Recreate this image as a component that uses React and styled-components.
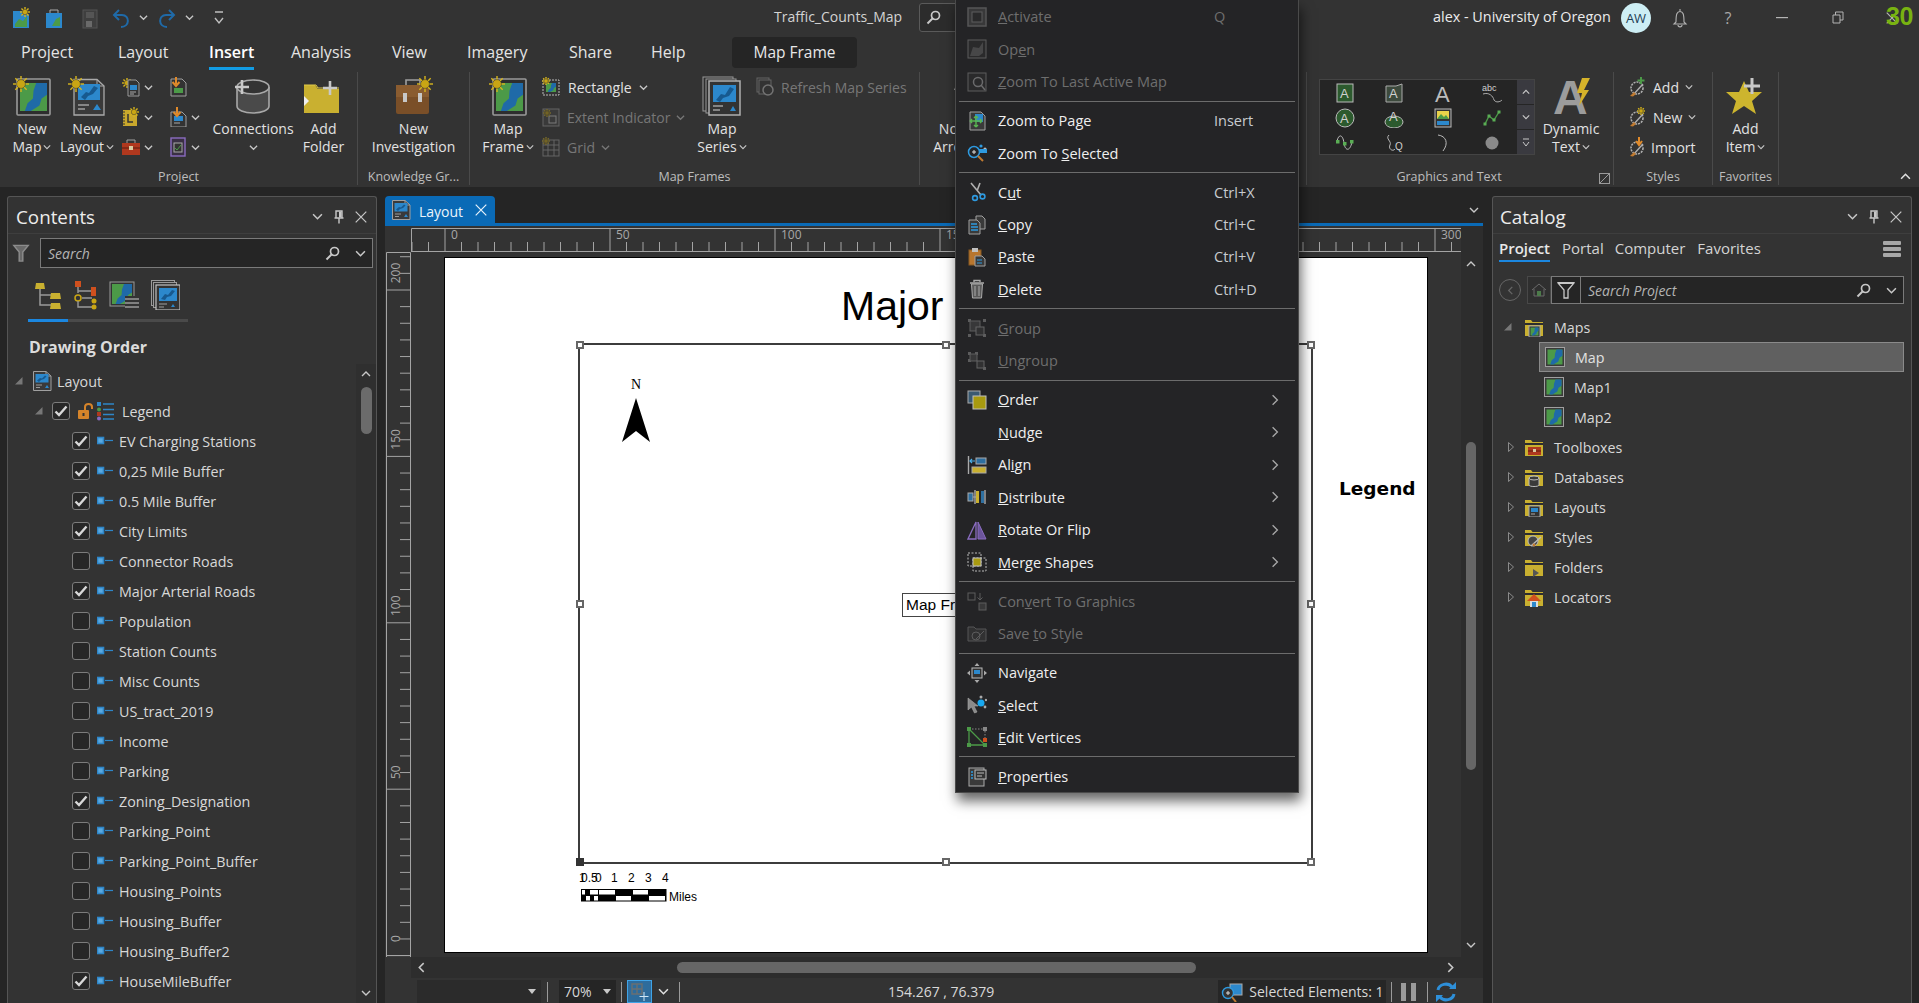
import React from 'react';
import styled, { createGlobalStyle } from 'styled-components';

const FONT = '"Open Sans", "Noto Sans", "Liberation Sans", sans-serif';

const Global = createGlobalStyle`
  html, body { margin: 0; padding: 0; background: #252525; overflow: hidden; }
  * { box-sizing: border-box; }
  body { font-family: ${FONT}; font-size: 14px; color: #e0e0e0; }
`;

const Screen = styled.div`
  position: relative; width: 1919px; height: 1003px; overflow: hidden; background: #252525;
`;

/* ---------- icon primitives ---------- */
const Svg = styled.svg`display: block; flex-shrink: 0;`;
const Ic = ({ w = 20, h = 20, vb, children }) => (
  <Svg width={w} height={h} viewBox={vb || `0 0 ${w} ${h}`} fill="none">{children}</Svg>
);
const Chev = ({ dir = 'down', size = 10, color = '#c8c8c8', sw = 1.4 }) => {
  const p = { down: '1,3 5,7 9,3', up: '1,7 5,3 9,7', left: '7,1 3,5 7,9', right: '3,1 7,5 3,9' }[dir];
  return <Ic w={size} h={size} vb="0 0 10 10"><polyline points={p} stroke={color} strokeWidth={sw} /></Ic>;
};
const CaretDown = ({ color = '#c8c8c8' }) => <Ic w={8} h={5} vb="0 0 8 5"><path d="M0 0H8L4 5Z" fill={color} /></Ic>;
const Sun = ({ x, y, r = 7 }) => {
  const rays = [0, 45, 90, 135].map((a) => {
    const c = Math.cos((a * Math.PI) / 180) * r, s = Math.sin((a * Math.PI) / 180) * r;
    return <line key={a} x1={x - c} y1={y - s} x2={x + c} y2={y + s} stroke="#d8b61c" strokeWidth={1.4} />;
  });
  return <g>{rays}<circle cx={x} cy={y} r={r * 0.55} fill="#c9a514" stroke="#333" strokeWidth={0.5} /></g>;
};
const MapFill = ({ x, y, w, h, land = '#4c9a48', sea = '#1f6aa8' }) => {
  const P = [[.6, 0], [1, 0], [1, .42], [.8, .55], [.72, .8], [.4, 1], [.18, 1], [.28, .72], [.48, .55], [.5, .28]];
  return <g><rect x={x} y={y} width={w} height={h} fill={land} /><polygon points={P.map(([a, b]) => `${x + a * w},${y + b * h}`).join(' ')} fill={sea} /></g>;
};
const MapTile = ({ size = 20 }) => (
  <Ic w={size} h={size} vb="0 0 20 20">
    <rect x=".5" y=".5" width="19" height="19" fill="#3a3a3a" stroke="#a0a0a0" />
    <MapFill x={2.5} y={2.5} w={15} h={15} />
  </Ic>
);
const LayoutArt = ({ dim }) => (
  <g opacity={dim ? .4 : 1}>
    <path d="M1.5 .5H14L19 5V19.5H1.5Z" fill="#3a3a3a" stroke="#a0a0a0" />
    <path d="M14 .5V5H19" stroke="#a0a0a0" />
    <rect x="3.5" y="3" width="13" height="8.5" fill="#2c88cc" />
    <path d="M5 9.5L8 7L10 7.5L13 4.5L14.5 5.5L12 8L9 9L7 11Z" fill="#17598f" />
    <path d="M4 14H10M4 16.5H8" stroke="#9a9a9a" />
    <path d="M13 17L15 14L17 17Z" fill="#2c88cc" />
  </g>
);
const LayoutTile = ({ size = 20 }) => <Ic w={size} h={size} vb="0 0 20 20"><LayoutArt /></Ic>;
const Funnel = ({ size = 18 }) => (
  <Ic w={size} h={size} vb="0 0 18 20"><path d="M1 1.5H17L11 9V19H7V9Z" stroke="#8c8c8c" strokeWidth="1.6" fill="#6a6a6a" /></Ic>
);
const Magnifier = () => (
  <Ic w={15} h={15} vb="0 0 15 15"><circle cx="9.5" cy="5.5" r="4" stroke="#c8c8c8" strokeWidth="1.7" /><line x1="6.5" y1="8.5" x2="1.5" y2="13.5" stroke="#c8c8c8" strokeWidth="2" /></Ic>
);
const Pin = () => (
  <Ic w={10} h={14} vb="0 0 10 14"><path d="M2 1H8V8H2ZM0.5 8H9.5M5 8V13.5" stroke="#c8c8c8" strokeWidth="1.4" /><rect x="5" y="1.5" width="2.5" height="6" fill="#c8c8c8" /></Ic>
);
const Close = ({ size = 12, color = '#c8c8c8' }) => (
  <Ic w={size} h={size} vb="0 0 12 12"><path d="M.7.7L11.3 11.3M11.3.7L.7 11.3" stroke={color} strokeWidth="1.2" /></Ic>
);
const Solid = () => <Ic w={8} h={8} vb="0 0 8 8"><path d="M7.5 0V7.5H0Z" fill="#777" /></Ic>;
const Hollow = () => <Ic w={6} h={10} vb="0 0 6 10"><path d="M.5.5L5.5 5L.5 9.5Z" stroke="#8a8a8a" /></Ic>;

/* ---------- ribbon icons ---------- */
const BigMap = () => (
  <Ic w={38} h={40}>
    <rect x="4" y="3" width="33" height="36" rx="1" fill="#2e2e2e" stroke="#9a9a9a" strokeWidth="1.6" />
    <MapFill x={7} y={7} w={27} h={28} />
    <Sun x={8} y={8} r={8} />
  </Ic>
);
const BigLayout = () => (
  <Ic w={38} h={40}>
    <path d="M6 3.5H29L36 10V39H6Z" fill="#3a3a3a" stroke="#aaa" strokeWidth="1.3" />
    <path d="M29 3.5V10H36" stroke="#aaa" />
    <rect x="10" y="8" width="22" height="16" fill="#2c88cc" />
    <path d="M13 21L18 16L21 17L26 10L30 12L25 18L20 20L17 24Z" fill="#17598f" />
    <path d="M10 29H21M10 33H17" stroke="#a0a0a0" strokeWidth="1.4" />
    <path d="M25 34L29 28L33 34Z" fill="#2c88cc" />
    <Sun x={8} y={8} r={8} />
  </Ic>
);
const Cylinder = () => (
  <Ic w={42} h={36}>
    <path d="M5 9V28C5 32 12 35 21 35S37 32 37 28V9" fill="#4a4a4a" stroke="#a8a8a8" strokeWidth="1.6" />
    <ellipse cx="21" cy="9" rx="16" ry="7" fill="#333" stroke="#a8a8a8" strokeWidth="1.6" />
    <path d="M10 2V16M3 9H17" stroke="#c8c8c8" strokeWidth="2.6" />
  </Ic>
);
const AddFolder = () => (
  <Ic w={44} h={36}>
    <path d="M2 7V35H37V11H16L13 7Z" fill="#c9b030" />
    <path d="M2 7H14L16 10H37" stroke="#e2cb4a" />
    <path d="M2 18L7 23L2 28Z" fill="#eee" />
    <path d="M28 3V17M21 10H35" stroke="#c8c8c8" strokeWidth="2.6" />
  </Ic>
);
const Briefcase = () => (
  <Ic w={42} h={40}>
    <path d="M13 9V4H27V9" stroke="#a0a0a0" strokeWidth="1.6" />
    <rect x="3" y="9" width="33" height="29" rx="2" fill="#7a4f28" />
    <rect x="3" y="9" width="33" height="12" fill="#8a5c30" />
    <rect x="10" y="17" width="4" height="9" fill="#c8c8c8" /><rect x="25" y="17" width="4" height="9" fill="#c8c8c8" />
    <Sun x={32} y={8} r={8} />
  </Ic>
);
const MapSeries = () => (
  <Ic w={40} h={40}>
    <rect x="1" y="1" width="30" height="34" fill="#2e2e2e" stroke="#9a9a9a" />
    <rect x="4" y="3" width="30" height="34" fill="#2e2e2e" stroke="#9a9a9a" />
    <rect x="7" y="5" width="31" height="34" fill="#333" stroke="#b0b0b0" strokeWidth="1.5" />
    <rect x="11" y="9" width="23" height="17" fill="#2c88cc" />
    <path d="M14 24L19 18L23 19L28 11L32 13L27 20L21 22L18 26Z" fill="#17598f" />
    <path d="M11 30H21M11 34H18" stroke="#a0a0a0" strokeWidth="1.3" />
    <path d="M28 35L31 30L34 35Z" fill="#2c88cc" />
  </Ic>
);
const DynamicA = styled.text`font-family: "Liberation Sans", sans-serif; font-size: 48px; font-weight: 700; fill: #9c9c9c;`;
const DynamicText = () => (
  <Ic w={40} h={40}>
    <DynamicA x="2" y="38">A</DynamicA>
    <path d="M31 2H39L33 14H38L28 30L31 17H26Z" fill="#d6b32a" />
  </Ic>
);
const StarPlus = () => (
  <Ic w={42} h={38}>
    <path d="M19 4L24 15L37 15L27 24L31 37L19 29L7 37L11 24L1 15L14 15Z" fill="#cdb52e" />
    <path d="M27 1V17M19 9H35" stroke="#c8c8c8" strokeWidth="3" />
  </Ic>
);
const NorthPeek = () => (
  <Ic w={20} h={36}><rect x="7" y="2" width="8" height="34" fill="#2c88cc" opacity=".7" /><path d="M11 0L6 12H16Z" fill="#aaa" /></Ic>
);
const Small = {
  newDoc: <Ic><Sun x={6} y={6} r={5} /><path d="M7 3H15L18 6V19H7Z" stroke="#9a9a9a" fill="#333" /><rect x="9" y="8" width="7" height="5" fill="#2c88cc" /><path d="M9 15H15M9 17H13" stroke="#aaa" /></Ic>,
  importDoc: <Ic><path d="M3 2H14L18 6V19H3Z" stroke="#a0a0a0" fill="#333" /><rect x="6" y="11" width="9" height="5" fill="#4c9a48" /><path d="M8 0V7M4.5 5L8 9L11.5 5" stroke="#e08a2a" strokeWidth="2" /></Ic>,
  report: <Ic><rect x="2" y="3" width="14" height="16" fill="#c9a82c" /><path d="M2 5h2M2 8h2M2 11h2M2 14h2M2 17h2" stroke="#333" /><path d="M7 7V15H12" stroke="#333" strokeWidth="1.5" /><Sun x={13} y={5} r={5} /></Ic>,
  importLayout: <Ic><path d="M3 5H14L18 9V20H3Z" stroke="#a0a0a0" fill="#333" /><rect x="6" y="9" width="9" height="5" fill="#2c88cc" /><path d="M6 16H12" stroke="#aaa" /><path d="M9 0V7M5.5 5L9 9L12.5 5" stroke="#e08a2a" strokeWidth="2" /></Ic>,
  toolbox: <Ic><rect x="1" y="6" width="18" height="12" fill="#b0381e" /><path d="M6 6V3H14V6" stroke="#a0a0a0" /><path d="M1 11H19" stroke="#5a1c10" /><rect x="8" y="9" width="4" height="4" fill="#d9c9a0" /></Ic>,
  notebook: <Ic><rect x="3" y="1" width="14" height="18" fill="#3a3044" stroke="#8a6cc0" strokeWidth="1.4" /><rect x="6" y="6" width="8" height="9" fill="#333" stroke="#aaa" /><path d="M7 11L9 13L13 8" stroke="#4c9a48" /></Ic>,
  rectangle: <Ic><rect x="2" y="3" width="16" height="15" stroke="#bbb" strokeDasharray="2 1" /><MapFill x={5} y={6} w={10} h={9} /><Sun x={5} y={4} r={4} /></Ic>,
  extent: <Ic><g opacity=".42"><rect x="2" y="2" width="16" height="17" stroke="#aaa" fill="#444" /><rect x="8" y="9" width="7" height="7" stroke="#ddd" /><Sun x={6} y={6} r={4} /></g></Ic>,
  grid: <Ic><g opacity=".42"><rect x="2" y="3" width="16" height="16" stroke="#aaa" /><path d="M2 8H18M2 13H18M7 3V19M13 3V19" stroke="#aaa" /><Sun x={5} y={4} r={4} /></g></Ic>,
  refresh: <Ic><g opacity=".42"><rect x="1" y="1" width="12" height="14" stroke="#aaa" /><rect x="3" y="3" width="12" height="14" stroke="#aaa" fill="#333" /><circle cx="12" cy="13" r="5" stroke="#ccc" strokeWidth="1.5" fill="#333" /></g></Ic>,
};
const Brush = ({ children }) => (
  <Ic>
    <circle cx="10" cy="11" r="6" stroke="#b0b0b0" strokeDasharray="2 1" strokeWidth="1.6" />
    <path d="M16 7L6 18" stroke="#b0b0b0" strokeWidth="1.4" />
    <path d="M7 15L3 19L6 19.5L9 17Z" fill="#c07a30" />
    {children}
  </Ic>
);
const GalleryGlyph = styled.text`font-family: "Liberation Sans", sans-serif; font-size: ${(p) => p.$s || 13}px; fill: ${(p) => p.$c || '#d0d0d0'};`;
const gallery = [
  <Ic key="0"><rect x="2" y="1" width="16" height="18" fill="#2c5a2e" stroke="#bbb" /><GalleryGlyph x="5" y="15">A</GalleryGlyph></Ic>,
  <Ic key="1"><path d="M2 3H12L18 1V19H2Z" fill="#3d4a3d" stroke="#aaa" /><GalleryGlyph x="5" y="15">A</GalleryGlyph></Ic>,
  <Ic key="2" w={22} h={22}><GalleryGlyph x="3" y="20" $s={22} $c="#bcbcbc">A</GalleryGlyph></Ic>,
  <Ic key="3" w={22} h={22}><GalleryGlyph x="1" y="9" $s={9}>abc</GalleryGlyph><path d="M2 12C8 10 12 14 13 18C15 21 19 20 21 18" stroke="#aaa" /></Ic>,
  <Ic key="4"><circle cx="10" cy="10" r="9" fill="#2c5a2e" stroke="#bbb" /><GalleryGlyph x="5" y="15">A</GalleryGlyph></Ic>,
  <Ic key="5"><ellipse cx="10" cy="14" rx="9" ry="6" fill="#2c5a2e" stroke="#bbb" /><GalleryGlyph x="5" y="13">A</GalleryGlyph></Ic>,
  <Ic key="6"><rect x="2" y="1" width="16" height="18" fill="#333" stroke="#bbb" /><rect x="4" y="3" width="12" height="8" fill="#e8d24a" /><path d="M4 11L8 6L11 9L13 7L16 11Z" fill="#4c9a48" /><rect x="4" y="13" width="12" height="4" fill="#2c88cc" /></Ic>,
  <Ic key="7"><path d="M3 16L7 8L12 12L17 4" stroke="#4c9a48" strokeWidth="1.4" /><rect x="1.5" y="14.5" width="3" height="3" fill="#5aae55" /><rect x="5.5" y="6.5" width="3" height="3" fill="#5aae55" /><rect x="10.5" y="10.5" width="3" height="3" fill="#5aae55" /><rect x="15.5" y="2.5" width="3" height="3" fill="#5aae55" /></Ic>,
  <Ic key="8"><path d="M2 8C4 0 8 2 9 10S15 19 17 9" stroke="#bbb" /><rect x="1" y="7" width="3.5" height="3.5" fill="#5aae55" /><rect x="8" y="9" width="3.5" height="3.5" fill="#5aae55" /><rect x="15" y="7" width="3.5" height="3.5" fill="#5aae55" /></Ic>,
  <Ic key="9"><path d="M5 2C1 6 8 8 6 12S9 19 11 16" stroke="#bbb" /><GalleryGlyph x="11" y="17" $s={10}>Q</GalleryGlyph></Ic>,
  <Ic key="10"><path d="M5 2C13 3 16 10 10 18" stroke="#bbb" /></Ic>,
  <Ic key="11"><circle cx="10" cy="10" r="6.5" fill="#8a8a8a" /></Ic>,
];

/* ---------- title bar ---------- */
const TitleBar = styled.div`
  height: 35px; background: #333; display: flex; align-items: center; position: relative;
`;
const Quick = styled.div`
  width: ${(p) => p.$w}px; margin-left: ${(p) => p.$ml || 0}px; display: flex; justify-content: center; align-items: center;
`;
const DocTitle = styled.div`
  margin-left: 533px; width: 145px; padding-bottom: 2px; font-size: 14px; color: #d4d4d4; white-space: nowrap;
`;
const TitleSearch = styled.div`
  width: 50px; height: 29px; border: 1px solid #5a5a5a; border-radius: 3px 0 0 3px; background: #2c2c2c;
  display: flex; align-items: center; padding-left: 6px;
`;
const UserName = styled.div`
  margin-left: 464px; width: 188px; padding-bottom: 2px; font-size: 14.4px; color: #ececec; white-space: nowrap;
`;
const Avatar = styled.div`
  width: 30px; height: 30px; border-radius: 50%; background: #cdeef4; color: #1d3d55;
  display: flex; align-items: center; justify-content: center; font-size: 13px;
`;
const WinBtn = styled.div`
  margin-left: ${(p) => p.$ml}px; width: 20px; display: flex; justify-content: center; color: #a8a8a8; font-size: 16px;
`;
const GreenBadge = styled.div`
  position: absolute; left: 1886px; top: 2px; font-size: 25px; font-weight: 800; color: #79b311;
  font-family: "Liberation Sans", sans-serif; letter-spacing: -.5px;
`;

/* ---------- tabs ---------- */
const TabRow = styled.div`
  height: 35px; background: #333; display: flex; align-items: flex-start;
`;
const RibbonTab = styled.div`
  width: ${(p) => p.$w}px; margin-left: ${(p) => p.$ml || 0}px; height: 33px; padding-top: 6px; line-height: 22px; font-size: 16px;
  font-weight: ${(p) => (p.$active ? 600 : 400)}; color: ${(p) => (p.$active ? '#fff' : '#e4e4e4')};
  white-space: nowrap;
`;
const Underlined = styled.span`
  display: inline-block; padding-bottom: 4px; border-bottom: 4px solid #129ce4; line-height: 22px;
`;
const ContextTab = styled.div`
  margin-left: 46px; margin-top: 2px; width: 125px; height: 31px; padding-bottom: 1px; background: #252525; border-radius: 4px;
  font-size: 15.5px; color: #e8e8e8; display: flex; align-items: center; justify-content: center;
`;

/* ---------- ribbon ---------- */
const Ribbon = styled.div`
  height: 117px; background: #333; padding-top: 2px; display: flex; position: relative;
`;
const Group = styled.div`
  width: ${(p) => p.$w}px; height: 113px; border-right: 1px solid #4a4a4a; display: flex; flex-direction: column;
  position: relative; flex-shrink: 0;
`;
const Tools = styled.div`
  height: 97px; display: flex; padding-left: ${(p) => p.$pl || 0}px;
`;
const GroupLabel = styled.div`
  height: 16px; line-height: 16px; text-align: center; font-size: 12.5px; color: #bdbdbd; white-space: nowrap;
  padding-right: ${(p) => p.$pr || 0}px;
`;
const Large = styled.div`
  width: ${(p) => p.$w}px; margin-left: ${(p) => p.$ml || 0}px; flex-shrink: 0; display: flex; flex-direction: column; align-items: center;
`;
const LargeIcon = styled.div`
  height: 48px; display: flex; align-items: center; justify-content: center;
`;
const LargeText = styled.div`
  font-size: 14px; line-height: 18px; color: #e2e2e2; text-align: center; white-space: nowrap;
  display: flex; flex-direction: column; align-items: center;
`;
const TextLine = styled.span`
  display: flex; align-items: center; gap: 2px; height: 18px;
`;
const SmallCol = styled.div`
  width: ${(p) => p.$w}px; margin-left: ${(p) => p.$ml || 0}px; flex-shrink: 0; display: flex; flex-direction: column;
`;
const SmallRow = styled.div`
  height: 30px; display: flex; align-items: center; gap: ${(p) => p.$gap ?? 6}px; font-size: 14px; white-space: nowrap;
  color: ${(p) => (p.$off ? '#777' : '#e2e2e2')};
`;
const MiniGrid = styled.div`
  margin-left: 6px; width: 89px; display: grid; grid-template-columns: 47px 42px; grid-auto-rows: 30px; align-items: center;
`;
const MiniCell = styled.div`display: flex; align-items: center; gap: 3px;`;
const Gallery = styled.div`
  margin-left: 12px; margin-top: 7px; width: 216px; height: 76px; background: #252525; border: 1px solid #444;
  display: flex; flex-shrink: 0;
`;
const GalleryGrid = styled.div`
  width: 197px; display: grid; grid-template-columns: repeat(4, 1fr); grid-auto-rows: 25px; align-items: center; justify-items: center;
`;
const GalleryScroll = styled.div`
  flex: 1; display: flex; flex-direction: column; gap: 1px; background: #252525;
`;
const GalleryBtn = styled.div`
  flex: 1; background: #3a3a40; display: flex; align-items: center; justify-content: center;
`;
const Launcher = styled.div`
  position: absolute; right: 3px; bottom: 1px; width: 11px; height: 11px; border: 1px solid #9a9a9a;
  background: linear-gradient(135deg, transparent 45%, #9a9a9a 45%, #9a9a9a 55%, transparent 55%);
`;
const CollapseBtn = styled.div`
  position: absolute; right: 8px; bottom: 5px;
`;

/* ---------- body ---------- */
const Body = styled.div`
  height: 816px; padding: 9px 7px 0; display: flex; align-items: stretch;
`;
const Panel = styled.div`
  width: ${(p) => p.$w}px; margin-left: ${(p) => p.$ml || 0}px; flex-shrink: 0; background: #333; border: 1px solid #555; border-bottom: none;
  border-radius: 3px 3px 0 0; display: flex; flex-direction: column; position: relative;
`;
const PanelHead = styled.div`
  height: 37px; border-bottom: 1px solid #3e3e3e; display: flex; align-items: center; padding: 4px 4px 0 ${(p) => p.$pl}px; flex-shrink: 0;
`;
const PanelTitle = styled.div`
  flex: 1; font-size: 18.8px; line-height: 26px; color: #ececec;
`;
const PanelBtn = styled.div`
  width: 22px; display: flex; justify-content: center; margin-top: -1px;
`;
const SearchRow = styled.div`
  display: flex; align-items: center; height: 30px; margin-top: 4px; flex-shrink: 0;
`;
const SearchBox = styled.div`
  flex: 1; height: 30px; background: #252525; border: 1px solid #7a7a7a; display: flex; align-items: center; padding: 0 6px;
  font-style: italic; font-size: 14px; color: #b4b4b4; margin-right: 3px;
`;
const SearchText = styled.div`flex: 1; padding-left: ${(p) => p.$pl ?? 1}px;`;
const SearchChev = styled.div`margin-left: 15px; display: flex;`;
const FilterSlot = styled.div`
  width: 32px; display: flex; justify-content: flex-start; padding-left: 4px;
`;
const ViewTools = styled.div`
  margin: 9px 0 0 20px; width: 160px; display: flex; flex-direction: column; flex-shrink: 0;
`;
const ViewIcons = styled.div`
  height: 36px; display: flex; align-items: center; justify-content: space-between; padding: 0 8px 0 6px;
`;
const ViewRail = styled.div`
  height: 3px; margin-top: 6px; background: #4a4a4a; position: relative;
`;
const ViewRailActive = styled.div`
  position: absolute; left: 0; top: 0; bottom: 0; width: 40px; background: #1b87e0;
`;
const OrderHead = styled.div`
  margin: 12px 0 0 21px; height: 26px; line-height: 26px; font-size: 16px; font-weight: 700; color: #dcdcdc; flex-shrink: 0;
`;
const TreeWrap = styled.div`
  flex: 1; display: flex; margin-top: 4px; min-height: 0;
`;
const TreeList = styled.div`
  flex: 1; padding-top: 2px; overflow: hidden;
`;
const TreeScroll = styled.div`
  width: 20px; background: #2f2f2f; display: flex; flex-direction: column; align-items: center; position: relative; flex-shrink: 0;
`;
const ScrollArrow = styled.div`
  height: 20px; display: flex; align-items: center; justify-content: center;
`;
const TreeThumb = styled.div`
  width: 11px; height: 47px; margin-top: 3px; border-radius: 6px; background: #6b6b6b;
`;
const ScrollPush = styled.div`flex: 1;`;
const Row = styled.div`
  height: 30px; display: flex; align-items: center; padding-left: ${(p) => p.$pl}px; font-size: 14.3px; color: #d8d8d8; white-space: nowrap;
`;
const Tri = styled.div`
  width: ${(p) => p.$w}px; display: flex; flex-shrink: 0;
`;
const Check = styled.div`
  width: 18px; height: 18px; border: 1px solid #7c7c7c; border-radius: 3px; background: #272727; flex-shrink: 0;
  display: flex; align-items: center; justify-content: center; margin-right: ${(p) => p.$mr ?? 7}px;
`;
const RowText = styled.span`margin-left: ${(p) => p.$ml}px;`;
const Tick = () => <Ic w={14} h={12} vb="0 0 14 12"><path d="M1.5 6.5L5 10L12.5 1.5" stroke="#d8d8d8" strokeWidth="2.4" /></Ic>;
const Sym = () => <Ic w={16} h={10} vb="0 0 16 10"><rect x=".5" y="1.5" width="6" height="6" fill="#5aa9e0" stroke="#2e86c8" strokeWidth="1.6" /><path d="M8 4.5H16" stroke="#2e86c8" strokeWidth="1.2" /></Ic>;
const Lock = () => <Ic w={17} h={18}><rect x="1" y="8" width="11" height="9" rx="1" fill="#d5842a" /><path d="M8 8V5C8 1 15 1 15 5V7" stroke="#d5842a" strokeWidth="2" /><rect x="5.5" y="11" width="2" height="3" fill="#333" /></Ic>;
const LegendIc = () => <Ic w={18} h={19}><rect x="0" y="0" width="4" height="4" fill="#2e86c8" /><circle cx="2" cy="7.5" r="2" fill="#4c9a48" /><rect x="0" y="10" width="4" height="4" fill="#b0381e" /><circle cx="2" cy="16.5" r="2" fill="#8a6cc0" /><path d="M6 2H17M6 7.5H17M6 12.5H17M6 17H17" stroke="#2e86c8" strokeWidth="1.6" /></Ic>;

/* contents view icons */
const DrawOrder = () => <Ic w={28} h={30}><path d="M6 5V25H18M6 15H18" stroke="#9a9a9a" strokeWidth="1.5" /><path d="M2 3H10L11 9H1ZM17 13H26L27 19H16ZM17 23H26L27 29H16Z" fill="#c9b030" /></Ic>;
const SourceOrder = () => <Ic w={24} h={30}><rect x="1" y="1" width="6" height="6" fill="#d0501e" /><circle cx="4" cy="18" r="3" stroke="#c9a514" strokeWidth="1.5" /><path d="M4 7V13M4 21V27H18M4 11H18M8 18H18" stroke="#9a9a9a" strokeWidth="1.4" /><rect x="17" y="7" width="5" height="5" fill="#d0501e" /><rect x="17" y="11" width="5" height="5" fill="#d0501e" /><circle cx="20" cy="21" r="2.5" fill="#c9a514" /><circle cx="20" cy="27" r="2.5" fill="#c9a514" /></Ic>;
const MapList = () => <Ic w={30} h={29}><rect x="1" y="1" width="24" height="24" fill="#333" stroke="#9a9a9a" /><MapFill x={3} y={3} w={20} h={20} /><rect x="16" y="15" width="14" height="14" fill="#333" /><path d="M16 18H30M16 22H30M16 26H30" stroke="#9a9a9a" strokeWidth="1.6" /></Ic>;
const Stack = () => <Ic w={29} h={30}><rect x=".5" y=".5" width="23" height="25" stroke="#9a9a9a" fill="#333" /><rect x="2.5" y="2.5" width="23" height="25" stroke="#9a9a9a" fill="#333" /><rect x="5" y="5" width="24" height="25" stroke="#c0c0c0" strokeWidth="1.2" fill="#333" /><rect x="8" y="8" width="18" height="13" fill="#2c88cc" /><path d="M10 19L14 14L17 15L21 10L24 11L20 16L16 17L14 20Z" fill="#17598f" /><path d="M8 24H16M8 27H13" stroke="#a0a0a0" /><path d="M20 27L22 24L24 27Z" fill="#2c88cc" /></Ic>;

/* ---------- centre ---------- */
const Center = styled.div`
  width: 1098px; margin-left: 8px; flex-shrink: 0; display: flex; flex-direction: column;
`;
const DocStrip = styled.div`
  height: 27px; display: flex; justify-content: space-between; align-items: center; padding-right: 4px; background: #252525;
`;
const DocTab = styled.div`
  width: 110px; height: 27px; background: #0a6ab6; border-radius: 4px 4px 0 0; display: flex; align-items: center;
  padding: 0 8px 0 6px; gap: 8px; color: #eaf4fb; font-size: 14px;
`;
const DocTabText = styled.span`flex: 1; padding-top: 3px;`;
const BlueRule = styled.div`height: 3px; background: #0a6ab6; flex-shrink: 0;`;
const Workspace = styled.div`
  display: grid; grid-template-columns: 26px 1050px 22px; grid-template-rows: 26px 705px 21px 25px; background: #333;
`;
const RulerText = styled.text`font-family: ${FONT}; font-size: 12px; fill: #a8a8a8;`;
const Corner = styled.div`background: ${(p) => p.$bg || '#333'};`;
const TopRuler = () => {
  const lines = [];
  for (let x = 445 - 411 - 16.5 * 2; x < 1050; x += 16.5) {
    const k = Math.round((x - 34) / 16.5);
    const major = k % 10 === 0 && k >= 0;
    lines.push(<line key={k} x1={x} x2={x} y1={major ? 2 : 16} y2={25} stroke="#a4a4a4" />);
    if (major) lines.push(<RulerText key={`t${k}`} x={x + 6} y={13}>{k * 5}</RulerText>);
  }
  return (
    <Ic w={1050} h={26}>
      <path d="M0.5 25V2.5H1050M0 25.5H1050" stroke="#a4a4a4" />
      {lines}
    </Ic>
  );
};
const LeftRuler = () => {
  const out = [];
  for (let i = -3; i <= 40; i++) {
    const y = 38 + (i * 166.4) / 10;
    const major = i % 10 === 0 && i >= 0;
    out.push(<line key={i} x1={major ? 1 : 15} x2={25} y1={y} y2={y} stroke="#a4a4a4" />);
    if (major) {
      const cy = y - 17;
      out.push(<RulerText key={`t${i}`} transform={`rotate(-90 11 ${cy})`} x={11} y={cy + 4} textAnchor="middle">{200 - i * 5}</RulerText>);
    }
  }
  return (
    <Ic w={26} h={705}>
      <path d="M1.5 705V.5H25.5V705" stroke="#a4a4a4" />
      <line x1="1" x2="25" y1="703.5" y2="703.5" stroke="#a4a4a4" />
      {out}
    </Ic>
  );
};
const Canvas = styled.div`
  padding: 5px 33px 4px; background: #333; height: 705px;
`;
const Page = styled.div`
  position: relative; width: 984px; height: 696px; background: #fff; border: 1px solid #000; color: #000;
  font-family: "Liberation Sans", sans-serif;
`;
const PageTitle = styled.div`
  position: absolute; left: 396px; top: 24px; font-size: 41px; line-height: 48px; white-space: nowrap;
`;
const Frame = styled.div`
  position: absolute; left: 133px; top: 85px; width: 735px; height: 521px; border: 2px solid #3c3c3c;
`;
const Handle = styled.div`
  position: absolute; left: ${(p) => p.$x}%; top: ${(p) => p.$y}%; width: 8px; height: 8px; margin: -4px 0 0 -4px;
  background: ${(p) => (p.$fill ? '#333' : '#fff')}; border: 2px solid ${(p) => (p.$fill ? '#333' : '#666')};
`;
const NorthBlock = styled.div`
  position: absolute; left: 40px; top: 32px; width: 32px; display: flex; flex-direction: column; align-items: center;
  font-family: "Liberation Serif", serif; font-size: 14px; line-height: 16px; gap: 5px;
`;
const FrameTag = styled.div`
  position: absolute; left: 322px; top: 248px; height: 24px; padding: 0 3px; line-height: 22px; background: #fff;
  border: 1px solid #444; font-family: "Liberation Sans", sans-serif; font-size: 15.5px; white-space: nowrap;
`;
const LegendWord = styled.div`
  position: absolute; left: 894px; top: 218px; font-family: "DejaVu Sans", sans-serif; font-weight: 700; font-size: 18.5px; line-height: 26px;
`;
const ScaleBar = styled.div`
  position: absolute; left: 134px; top: 613px; width: 170px; height: 40px;
`;
const ScaleLabel = styled.span`
  position: absolute; left: ${(p) => p.$x}px; top: ${(p) => p.$y}px; font-size: 12px; line-height: 14px;
`;
const ScaleGraphic = () => {
  const tops = [[1, 4], [9, 17], [18, 34], [52, 67]], bots = [[5, 9], [13, 17], [35, 50], [68, 84]];
  return (
    <Ic w={86} h={13}>
      <rect x="0" y="0" width="85.5" height="12.5" fill="#000" />
      {tops.map(([a, b]) => <rect key={a} x={a} y="1" width={b - a} height="4.5" fill="#fff" />)}
      {bots.map(([a, b]) => <rect key={a} x={a} y="7" width={b - a} height="4.5" fill="#fff" />)}
    </Ic>
  );
};
const ScaleBarDraw = styled.div`position: absolute; left: 2px; top: 18px;`;
const VScroll = styled.div`
  background: #2d2d2d; display: flex; flex-direction: column; align-items: center; padding: 2px 2px 2px 0;
`;
const VThumb = styled.div`
  width: 10px; height: 328px; margin-top: 168px; border-radius: 5px; background: #666;
`;
const HScroll = styled.div`
  background: #2d2d2d; display: flex; align-items: center; padding-left: 266px; position: relative;
`;
const HThumb = styled.div`
  width: 519px; height: 11px; border-radius: 6px; background: #666;
`;
const HArrow = styled.div`
  position: absolute; ${(p) => (p.$right ? 'right: 5px;' : 'left: 5px;')} top: 5px;
`;
const StatusBar = styled.div`
  grid-column: 1 / -1; background: #333; display: flex; align-items: center; font-size: 14px; color: #d8d8d8; white-space: nowrap; padding-top: 2px;
`;
const StatusBox = styled.div`
  margin-left: ${(p) => p.$ml}px; width: ${(p) => p.$w}px; height: 23px; background: ${(p) => p.$bg}; flex-shrink: 0;
  display: flex; align-items: center; justify-content: ${(p) => p.$justify || 'flex-end'}; padding: 0 5px 0 ${(p) => p.$pl ?? 5}px; gap: 6px;
`;
const StatusSep = styled.div`
  margin-left: ${(p) => p.$ml}px; width: 1px; height: 20px; background: #9a9a9a; flex-shrink: 0;
`;
const GridToggle = styled.div`
  margin-left: 5px; width: 25px; height: 23px; background: #2e6c9c; border: 1px solid #3fa4e8; display: flex; align-items: center; justify-content: center;
`;
const StatusItem = styled.div`
  margin-left: ${(p) => p.$ml}px; display: flex; align-items: center;
`;
const PauseBar = styled.div`
  width: 5px; height: 18px; background: #9a9a9a; margin-right: 5px;
`;

/* ---------- catalog ---------- */
const CatTabs = styled.div`
  height: 28px; display: flex; align-items: flex-start; padding-left: 6px; position: relative; flex-shrink: 0;
`;
const CatTab = styled.div`
  margin-right: ${(p) => p.$mr}px; height: 28px; line-height: 29px; font-size: 15px; color: ${(p) => (p.$on ? '#e8e8e8' : '#d4d4d4')};
  font-weight: ${(p) => (p.$on ? 600 : 400)}; border-bottom: ${(p) => (p.$on ? '2px solid #1b87e0' : 'none')}; white-space: nowrap;
`;
const Hamburger = styled.div`
  position: absolute; right: 10px; top: 7px; width: 18px; height: 16px; display: flex; flex-direction: column; justify-content: space-between;
`;
const HamBar = styled.div`height: 4px; background: #a8a8a8; border-radius: 1px;`;
const CatSearch = styled.div`
  margin-top: 14px; height: 28px; padding: 0 7px 0 6px; display: flex; align-items: center; flex-shrink: 0;
`;
const RoundBack = styled.div`
  width: 22px; height: 22px; border-radius: 50%; border: 1.5px solid #666; display: flex; align-items: center; justify-content: center; margin-right: 6px;
`;
const SquareBtn = styled.div`
  width: ${(p) => p.$w}px; height: 28px; border: 1px solid ${(p) => (p.$on ? '#7a7a7a' : '#484848')}; background: ${(p) => (p.$on ? '#252525' : '#2f2f2f')};
  display: flex; align-items: center; justify-content: center; flex-shrink: 0;
`;
const CatInput = styled(SearchBox)`
  height: 28px; margin-right: 0; border-left: none;
`;
const CatTree = styled.div`padding-top: 8px; flex: 1;`;
const SelRow = styled(Row)`
  margin: 0 7px 0 46px; padding-left: 5px; background: #606060; border: 1px solid #8a8a8a; color: #e0e0e0;
`;
const FolderBase = ({ children }) => (
  <Ic w={20} h={20}>
    <path d="M1 3H7L8.5 5H19V19H1Z" fill="#c9b030" />
    <rect x="1" y="6" width="18" height="2" fill="#2e2e2e" />
    {children}
  </Ic>
);
const catIcons = {
  maps: <FolderBase><rect x="5" y="9" width="11" height="11" fill="#333" stroke="#aaa" /><MapFill x={6.5} y={10.5} w={8} h={8} /></FolderBase>,
  toolboxes: <FolderBase><rect x="4" y="10" width="13" height="8" fill="#b0381e" /><path d="M4 14H17" stroke="#5a1c10" /><rect x="9" y="12" width="3" height="3" fill="#d9c9a0" /></FolderBase>,
  databases: <FolderBase><path d="M5 11V18C5 20 15 20 15 18V11" fill="#3a3a3a" stroke="#bbb" /><ellipse cx="10" cy="11" rx="5" ry="2" fill="#3a3a3a" stroke="#bbb" /></FolderBase>,
  layouts: <FolderBase><rect x="5" y="9" width="11" height="11" fill="#333" stroke="#aaa" /><rect x="7" y="11" width="7" height="4" fill="#2c88cc" /><path d="M7 17H11" stroke="#aaa" /></FolderBase>,
  styles: <FolderBase><circle cx="9" cy="14" r="5" fill="#444" stroke="#bbb" /><path d="M17 10L7 19" stroke="#bbb" strokeWidth="1.4" /><circle cx="10" cy="18" r="1.4" fill="#c07a30" /></FolderBase>,
  folders: <FolderBase><path d="M9 12L15 16L9 20Z" fill="#555" /></FolderBase>,
  locators: <FolderBase><path d="M3 14L10 7L17 14Z" fill="#d0501e" /><rect x="6" y="14" width="8" height="6" fill="#ddd" /><rect x="8" y="15" width="4" height="5" fill="#2c88cc" /></FolderBase>,
};

/* ---------- context menu ---------- */
const Menu = styled.div`
  position: absolute; left: 955px; top: 0; width: 344px; height: 793px; padding-top: .5px;
  background: #242426; border: 1px solid #4a4a4a; border-top: none; box-shadow: 2px 8px 12px rgba(0, 0, 0, .6);
  display: flex; flex-direction: column; font-size: 14.5px;
`;
const MenuRow = styled.div`
  height: 32.44px; display: flex; align-items: center; flex-shrink: 0; white-space: nowrap; padding-right: 17px;
  color: ${(p) => (p.$off ? '#6e6e6e' : '#efefef')};
`;
const MenuIcon = styled.div`
  width: 42px; flex-shrink: 0; display: flex; justify-content: center; opacity: ${(p) => (p.$off ? 0.42 : 1)};
`;
const MenuLabel = styled.div`width: 216px; flex-shrink: 0;`;
const MenuKey = styled.div`
  flex: 1; color: ${(p) => (p.$off ? '#6e6e6e' : '#c8ccd0')};
`;
const MenuSep = styled.div`
  height: 6.6px; flex-shrink: 0; display: flex; align-items: center; padding: 0 3px;
`;
const MenuLine = styled.div`flex: 1; height: 1px; background: #6c6c6c;`;

const menuIc = {
  activate: <Ic><rect x="1" y="1" width="18" height="18" fill="#555" stroke="#999" strokeWidth="1.5" /><rect x="5" y="5" width="10" height="10" fill="#333" stroke="#aaa" /></Ic>,
  open: <Ic><rect x="1" y="1" width="18" height="18" fill="#333" stroke="#aaa" /><path d="M3 17L6 8L12 9L16 3V14L12 17Z" fill="#777" /></Ic>,
  zlast: <Ic><rect x="1" y="1" width="18" height="18" fill="#333" stroke="#aaa" /><circle cx="11" cy="10" r="4.5" stroke="#ccc" strokeWidth="1.5" /><path d="M14 13L18 18" stroke="#ccc" strokeWidth="1.5" /></Ic>,
  page: <Ic><path d="M3 1H14L18 5V19H3Z" fill="#3a3a3a" stroke="#a0a0a0" /><rect x="8" y="3" width="8" height="8" fill="#2c88cc" /><path d="M9 5L9 16M3 10H15M9 5L7 7M9 5L11 7M9 16L7 14M9 16L11 14M3 10L5 8M3 10L5 12M15 10L13 8M15 10L13 12" stroke="#5ab552" strokeWidth="1.4" /></Ic>,
  zsel: <Ic><circle cx="7" cy="9" r="5.5" stroke="#2e9ae0" strokeWidth="1.5" /><path d="M5 9H9M7 7V11" stroke="#ddd" /><path d="M11 13L16 18" stroke="#c07a30" strokeWidth="2" /><circle cx="14" cy="3" r="1.6" fill="#2e9ae0" /><circle cx="18" cy="6" r="1.6" fill="#bbb" /><rect x="12" y="6" width="8" height="4" fill="#2e9ae0" /></Ic>,
  cut: <Ic><path d="M4 1L14 13M13 1L10 9" stroke="#b0b0b0" strokeWidth="1.6" /><circle cx="8" cy="16" r="2.4" stroke="#2e9ae0" strokeWidth="1.6" /><circle cx="15.5" cy="14.5" r="2.4" stroke="#2e9ae0" strokeWidth="1.6" /></Ic>,
  copy: <Ic><path d="M9 1H15L18 4V14H9Z" fill="#3a3a3a" stroke="#a0a0a0" /><path d="M2 5H10L13 8V19H2Z" fill="#3a3a3a" stroke="#a0a0a0" /><path d="M4 9H10M4 12H11M4 15H11" stroke="#2e9ae0" strokeWidth="1.5" /></Ic>,
  paste: <Ic><rect x="2" y="3" width="12" height="15" fill="#b8762e" stroke="#8a5a22" /><rect x="5" y="1" width="6" height="4" fill="#c0c0c0" /><path d="M8 9H15L18 12V19H8Z" fill="#3a3a3a" stroke="#a0a0a0" /><path d="M10 13H15M10 16H15" stroke="#2e9ae0" /></Ic>,
  del: <Ic><path d="M3 4H17M7 3V1.5H13V3" stroke="#aaa" strokeWidth="1.4" /><path d="M4.5 5H15.5L14.5 19H5.5Z" fill="#5a5a5a" stroke="#aaa" /><path d="M8 7V17M12 7V17" stroke="#aaa" /></Ic>,
  group: <Ic><rect x="1" y="1" width="3" height="3" fill="#aaa" /><rect x="16" y="1" width="3" height="3" fill="#aaa" /><rect x="1" y="16" width="3" height="3" fill="#aaa" /><rect x="16" y="16" width="3" height="3" fill="#aaa" /><rect x="3" y="3" width="10" height="10" fill="#555" stroke="#aaa" /><rect x="9" y="9" width="8" height="8" fill="#444" stroke="#bbb" /></Ic>,
  ungroup: <Ic><rect x="1" y="1" width="3" height="3" fill="#aaa" /><rect x="8" y="1" width="3" height="3" fill="#aaa" /><rect x="1" y="8" width="3" height="3" fill="#aaa" /><rect x="16" y="16" width="3" height="3" fill="#aaa" /><rect x="3" y="3" width="7" height="7" fill="#555" stroke="#aaa" /><rect x="10" y="10" width="7" height="7" fill="#444" stroke="#bbb" /></Ic>,
  order: <Ic><rect x="1" y="1" width="12" height="12" fill="#3a5a72" stroke="#aaa" /><rect x="6" y="6" width="13" height="13" fill="#a89a10" stroke="#c0c0c0" /></Ic>,
  align: <Ic><path d="M1.5 1V19" stroke="#aaa" strokeWidth="1.4" /><rect x="9" y="3" width="10" height="6" fill="#2e6fa0" stroke="#aaa" /><rect x="5" y="12" width="14" height="6" fill="#c9b030" stroke="#aaa" /><path d="M8 6H3M5 4L3 6L5 8" stroke="#4ab0e8" strokeWidth="1.2" /></Ic>,
  distribute: <Ic><rect x="1" y="6" width="5" height="8" fill="#2e6fa0" stroke="#aaa" /><path d="M8 3V17M18 3V17" stroke="#aaa" strokeWidth="1.4" /><rect x="9" y="4" width="3" height="12" fill="#c9b030" /><rect x="14" y="4" width="3" height="12" fill="#2e6fa0" /><path d="M6 10H9" stroke="#aaa" /></Ic>,
  rotate: <Ic><path d="M9 2V19H1Z" stroke="#8a6cc0" strokeWidth="1.3" /><path d="M11 2V19H19Z" fill="#6c559c" stroke="#8a6cc0" /></Ic>,
  merge: <Ic><rect x="1" y="1" width="13" height="13" stroke="#bbb" strokeDasharray="2 1.5" /><rect x="6" y="6" width="13" height="13" stroke="#bbb" strokeDasharray="2 1.5" /><rect x="6" y="6" width="8" height="8" fill="#a89a10" stroke="#c0c0c0" /></Ic>,
  convert: <Ic><rect x="1" y="2" width="7" height="7" stroke="#aaa" /><rect x="12" y="12" width="7" height="7" stroke="#aaa" fill="#555" /><path d="M13 2V9M10.5 6.5L13 9L15.5 6.5" stroke="#aaa" /></Ic>,
  save: <Ic><path d="M1 3H7L9 5H19V17H1Z" fill="#444" stroke="#999" /><circle cx="9" cy="12" r="4" stroke="#aaa" /><path d="M17 7L9 15" stroke="#aaa" /></Ic>,
  navigate: <Ic><rect x="5" y="5" width="10" height="10" fill="#333" stroke="#bbb" /><rect x="7" y="7" width="6" height="4" fill="#2c88cc" /><path d="M10 0L7.5 3H12.5ZM10 20L7.5 17H12.5ZM0 10L3 7.5V12.5ZM20 10L17 7.5V12.5Z" fill="#aaa" /></Ic>,
  select: <Ic><path d="M1 3V15L4.5 12L7.5 18L10 17L7 11H11Z" fill="#8a8a8a" stroke="#aaa" strokeWidth=".6" /><circle cx="14" cy="8" r="3.5" fill="#18a8f0" /><circle cx="14" cy="2" r="1.5" fill="#aaa" /><circle cx="19" cy="5" r="1.2" fill="#aaa" /><circle cx="18" cy="12" r="1.4" fill="#aaa" /></Ic>,
  vertices: <Ic><path d="M2 2V18H18L2 2" stroke="#4c9a48" strokeWidth="1.3" /><path d="M2 2H18V18" stroke="#888" strokeDasharray="1.5 1.5" /><rect x="0" y="0" width="4" height="4" fill="#4c9a48" /><rect x="0" y="16" width="4" height="4" fill="#4c9a48" /><rect x="16" y="16" width="4" height="4" fill="#4c9a48" /><rect x="16" y="11" width="4" height="4" fill="#d0501e" /><rect x="16" y="0" width="4" height="4" fill="#888" /></Ic>,
  props: <Ic><rect x="2" y="1" width="15" height="18" fill="#3a3a3a" stroke="#aaa" /><path d="M4 5H6M4 8H6M4 11H6" stroke="#2e9ae0" strokeWidth="1.4" /><rect x="8" y="3" width="11" height="9" fill="#333" stroke="#bbb" /><path d="M10 6H17M10 9H15" stroke="#bbb" /></Ic>,
};

const menu = [
  { t: 'Activate', u: 0, off: 1, k: 'Q', i: 'activate' },
  { t: 'Open', u: 2, off: 1, i: 'open' },
  { t: 'Zoom To Last Active Map', u: 0, off: 1, i: 'zlast' },
  'sep',
  { t: 'Zoom to Page', u: 10, k: 'Insert', i: 'page' },
  { t: 'Zoom To Selected', u: 8, i: 'zsel' },
  'sep',
  { t: 'Cut', u: 1, k: 'Ctrl+X', i: 'cut' },
  { t: 'Copy', u: 0, k: 'Ctrl+C', i: 'copy' },
  { t: 'Paste', u: 0, k: 'Ctrl+V', i: 'paste' },
  { t: 'Delete', u: 0, k: 'Ctrl+D', i: 'del' },
  'sep',
  { t: 'Group', u: 0, off: 1, i: 'group' },
  { t: 'Ungroup', u: 0, off: 1, i: 'ungroup' },
  'sep',
  { t: 'Order', u: 0, sub: 1, i: 'order' },
  { t: 'Nudge', u: 0, sub: 1 },
  { t: 'Align', u: 2, sub: 1, i: 'align' },
  { t: 'Distribute', u: 0, sub: 1, i: 'distribute' },
  { t: 'Rotate Or Flip', u: 0, sub: 1, i: 'rotate' },
  { t: 'Merge Shapes', u: 0, sub: 1, i: 'merge' },
  'sep',
  { t: 'Convert To Graphics', u: 3, off: 1, i: 'convert' },
  { t: 'Save to Style', u: 5, off: 1, i: 'save' },
  'sep',
  { t: 'Navigate', u: 4, i: 'navigate' },
  { t: 'Select', u: 0, i: 'select' },
  { t: 'Edit Vertices', u: 0, i: 'vertices' },
  'sep',
  { t: 'Properties', u: 0, i: 'props' },
];

const layers = [
  ['EV Charging Stations', 1], ['0,25 Mile Buffer', 1], ['0.5 Mile Buffer', 1], ['City Limits', 1], ['Connector Roads', 0],
  ['Major Arterial Roads', 1], ['Population', 0], ['Station Counts', 0], ['Misc Counts', 0], ['US_tract_2019', 0], ['Income', 0],
  ['Parking', 0], ['Zoning_Designation', 1], ['Parking_Point', 0], ['Parking_Point_Buffer', 0], ['Housing_Points', 0],
  ['Housing_Buffer', 0], ['Housing_Buffer2', 0], ['HouseMileBuffer', 1],
];

const Lg = ({ w, ml, icon, a, b, caret }) => (
  <Large $w={w} $ml={ml}>
    <LargeIcon>{icon}</LargeIcon>
    <LargeText>
      <TextLine>{a}</TextLine>
      <TextLine>{b}{caret && <Chev size={8} />}</TextLine>
    </LargeText>
  </Large>
);

export default function App() {
  return (
    <Screen>
      <Global />
      <TitleBar>
        <Quick $w={23} $ml={9}>
          <Ic w={20} h={22}><path d="M2 4H14L18 8V21H2Z" fill="#2c88cc" /><path d="M4 17L8 12L12 14L16 9V20H4Z" fill="#4c9a48" /><Sun x={14} y={5} r={5} /></Ic>
        </Quick>
        <Quick $w={44}>
          <Ic w={20} h={22}><path d="M6 7V3H14V7" stroke="#aaa" /><rect x="2" y="6" width="16" height="15" fill="#2c88cc" /><path d="M8 19L12 12L16 10V19Z" fill="#4c9a48" /></Ic>
        </Quick>
        <Quick $w={28}>
          <Ic w={18} h={22}><rect x="2" y="3" width="14" height="18" fill="#3f3f3f" stroke="#555" /><rect x="5" y="5" width="8" height="6" fill="#555" /><rect x="5" y="14" width="6" height="6" fill="#6a6a6a" /></Ic>
        </Quick>
        <Quick $w={33}>
          <Ic w={18} h={22}><path d="M7 3L2 8L7 13" stroke="#1f6aa8" strokeWidth="2" /><path d="M2 8H10C18 8 18 20 9 20" stroke="#1f6aa8" strokeWidth="2" /></Ic>
        </Quick>
        <Quick $w={13}><Chev size={9} /></Quick>
        <Quick $w={33}>
          <Ic w={18} h={22}><path d="M11 3L16 8L11 13" stroke="#1f6aa8" strokeWidth="2" /><path d="M16 8H8C0 8 0 20 9 20" stroke="#1f6aa8" strokeWidth="2" /></Ic>
        </Quick>
        <Quick $w={13}><Chev size={9} /></Quick>
        <Quick $w={45}>
          <Ic w={10} h={14}><path d="M1 1H9M1 7L5 12L9 7" stroke="#c0c0c0" strokeWidth="1.4" /></Ic>
        </Quick>
        <DocTitle>Traffic_Counts_Map</DocTitle>
        <TitleSearch><Magnifier /></TitleSearch>
        <UserName>alex - University of Oregon</UserName>
        <Avatar>AW</Avatar>
        <WinBtn $ml={19}>
          <Ic w={16} h={20}><path d="M8 1V3M4 14C4 6 5 3.5 8 3.5S12 6 12 14L14 16H2ZM6 17C6 19.5 10 19.5 10 17" stroke="#b4b4b4" strokeWidth="1.1" /></Ic>
        </WinBtn>
        <WinBtn $ml={28}>?</WinBtn>
        <WinBtn $ml={34}><Ic w={12} h={2}><rect width="12" height="1.2" fill="#b4b4b4" /></Ic></WinBtn>
        <WinBtn $ml={36}><Ic w={12} h={13}><path d="M1 4H8V12H1ZM3.5 4V1H11V9H8" stroke="#b4b4b4" /></Ic></WinBtn>
        <WinBtn $ml={34}><Close color="#b4b4b4" /></WinBtn>
        <GreenBadge>30</GreenBadge>
      </TitleBar>

      <TabRow>
        <RibbonTab $w={97} $ml={21}>Project</RibbonTab>
        <RibbonTab $w={91}>Layout</RibbonTab>
        <RibbonTab $w={82} $active><Underlined>Insert</Underlined></RibbonTab>
        <RibbonTab $w={101}>Analysis</RibbonTab>
        <RibbonTab $w={75}>View</RibbonTab>
        <RibbonTab $w={102}>Imagery</RibbonTab>
        <RibbonTab $w={82}>Share</RibbonTab>
        <RibbonTab $w={35}>Help</RibbonTab>
        <ContextTab>Map Frame</ContextTab>
      </TabRow>

      <Ribbon>
        <Group $w={358}>
          <Tools $pl={5}>
            <Lg w={54} icon={<BigMap />} a="New" b="Map" caret />
            <Lg w={56} icon={<BigLayout />} a="New" b="Layout" caret />
            <MiniGrid>
              <MiniCell>{Small.newDoc}<Chev size={9} /></MiniCell><MiniCell>{Small.importDoc}</MiniCell>
              <MiniCell>{Small.report}<Chev size={9} /></MiniCell><MiniCell>{Small.importLayout}<Chev size={9} /></MiniCell>
              <MiniCell>{Small.toolbox}<Chev size={9} /></MiniCell><MiniCell>{Small.notebook}<Chev size={9} /></MiniCell>
            </MiniGrid>
            <Lg w={86} icon={<Cylinder />} a="Connections" b={<Chev size={9} />} />
            <Lg w={55} icon={<AddFolder />} a="Add" b="Folder" />
          </Tools>
          <GroupLabel>Project</GroupLabel>
        </Group>
        <Group $w={112}>
          <Tools><Lg w={111} icon={<Briefcase />} a="New" b="Investigation" /></Tools>
          <GroupLabel>Knowledge Gr...</GroupLabel>
        </Group>
        <Group $w={450}>
          <Tools $pl={6}>
            <Lg w={64} icon={<BigMap />} a="Map" b="Frame" caret />
            <SmallCol $w={146} $ml={1}>
              <SmallRow $gap={7}>{Small.rectangle}Rectangle<Chev size={9} /></SmallRow>
              <SmallRow $off $gap={6}>{Small.extent}Extent Indicator<Chev size={9} color="#777" /></SmallRow>
              <SmallRow $off $gap={6}>{Small.grid}Grid<Chev size={9} color="#777" /></SmallRow>
            </SmallCol>
            <Lg w={62} ml={4} icon={<MapSeries />} a="Map" b="Series" caret />
            <SmallCol $w={160} $ml={3}>
              <SmallRow $off $gap={5}>{Small.refresh}Refresh Map Series</SmallRow>
            </SmallCol>
          </Tools>
          <GroupLabel>Map Frames</GroupLabel>
        </Group>
        <Group $w={387}>
          <Tools $pl={8}><Lg w={60} icon={<NorthPeek />} a="North" b="Arrow" caret /></Tools>
        </Group>
        <Group $w={307}>
          <Tools>
            <Gallery>
              <GalleryGrid>{gallery}</GalleryGrid>
              <GalleryScroll>
                <GalleryBtn><Chev dir="up" size={8} /></GalleryBtn>
                <GalleryBtn><Chev size={8} /></GalleryBtn>
                <GalleryBtn><Ic w={8} h={9}><path d="M1 1H7M1 4L4 8L7 4" stroke="#c8c8c8" /></Ic></GalleryBtn>
              </GalleryScroll>
            </Gallery>
            <Lg w={72} icon={<DynamicText />} a="Dynamic" b="Text" caret />
          </Tools>
          <GroupLabel $pr={22}>Graphics and Text</GroupLabel>
          <Launcher />
        </Group>
        <Group $w={99}>
          <Tools $pl={13}>
            <SmallCol $w={80}>
              <SmallRow $gap={6}><Brush><path d="M14 0V7M10.5 3.5H17.5" stroke="#4c9a48" strokeWidth="2" /></Brush>Add<Chev size={8} /></SmallRow>
              <SmallRow $gap={6}><Brush><Sun x={14} y={4} r={4} /></Brush>New<Chev size={8} /></SmallRow>
              <SmallRow $gap={4}><Brush><path d="M12 0V7M9 4L12 8L15 4" stroke="#e08a2a" strokeWidth="2" /></Brush>Import</SmallRow>
            </SmallCol>
          </Tools>
          <GroupLabel>Styles</GroupLabel>
        </Group>
        <Group $w={66}>
          <Tools><Lg w={65} icon={<StarPlus />} a="Add" b="Item" caret /></Tools>
          <GroupLabel>Favorites</GroupLabel>
        </Group>
        <CollapseBtn><Chev dir="up" size={11} color="#e0e0e0" /></CollapseBtn>
      </Ribbon>

      <Body>
        <Panel $w={370}>
          <PanelHead $pl={8}>
            <PanelTitle>Contents</PanelTitle>
            <PanelBtn><Chev size={11} /></PanelBtn>
            <PanelBtn><Pin /></PanelBtn>
            <PanelBtn><Close /></PanelBtn>
          </PanelHead>
          <SearchRow>
            <FilterSlot><Funnel /></FilterSlot>
            <SearchBox>
              <SearchText>Search</SearchText>
              <Magnifier />
              <SearchChev><Chev size={11} /></SearchChev>
            </SearchBox>
          </SearchRow>
          <ViewTools>
            <ViewIcons><DrawOrder /><SourceOrder /><MapList /><Stack /></ViewIcons>
            <ViewRail><ViewRailActive /></ViewRail>
          </ViewTools>
          <OrderHead>Drawing Order</OrderHead>
          <TreeWrap>
            <TreeList>
              <Row $pl={7}><Tri $w={17}><Solid /></Tri><LayoutTile /><RowText $ml={5}>Layout</RowText></Row>
              <Row $pl={27}>
                <Tri $w={17}><Solid /></Tri>
                <Check $mr={7}><Tick /></Check><Lock /><RowText $ml={3}><LegendIc /></RowText><RowText $ml={7}>Legend</RowText>
              </Row>
              {layers.map(([name, on]) => (
                <Row key={name} $pl={64}>
                  <Check>{on ? <Tick /> : null}</Check>
                  <Sym />
                  <RowText $ml={6}>{name}</RowText>
                </Row>
              ))}
            </TreeList>
            <TreeScroll>
              <ScrollArrow><Chev dir="up" size={10} /></ScrollArrow>
              <TreeThumb />
              <ScrollPush />
              <ScrollArrow><Chev size={10} /></ScrollArrow>
            </TreeScroll>
          </TreeWrap>
        </Panel>

        <Center>
          <DocStrip>
            <DocTab><LayoutTile /><DocTabText>Layout</DocTabText><Close size={12} color="#e8f2fa" /></DocTab>
            <Chev size={10} />
          </DocStrip>
          <BlueRule />
          <Workspace>
            <Corner />
            <TopRuler />
            <Corner $bg="#2d2d2d" />
            <LeftRuler />
            <Canvas>
              <Page>
                <PageTitle>Major</PageTitle>
                <Frame>
                  <Handle $x={0} $y={0} /><Handle $x={50} $y={0} /><Handle $x={100} $y={0} />
                  <Handle $x={0} $y={50} /><Handle $x={100} $y={50} />
                  <Handle $x={0} $y={100} $fill /><Handle $x={50} $y={100} /><Handle $x={100} $y={100} />
                  <NorthBlock>N<Ic w={30} h={44}><path d="M15 0L29 44L15 33L1 44Z" fill="#000" /></Ic></NorthBlock>
                  <FrameTag>Map Frame</FrameTag>
                </Frame>
                <LegendWord>Legend</LegendWord>
                <ScaleBar>
                  <ScaleLabel $x={0} $y={0}>1</ScaleLabel>
                  <ScaleLabel $x={2} $y={0}>0.5</ScaleLabel>
                  <ScaleLabel $x={16} $y={0}>0</ScaleLabel>
                  <ScaleLabel $x={32} $y={0}>1</ScaleLabel>
                  <ScaleLabel $x={49} $y={0}>2</ScaleLabel>
                  <ScaleLabel $x={66} $y={0}>3</ScaleLabel>
                  <ScaleLabel $x={83} $y={0}>4</ScaleLabel>
                  <ScaleBarDraw><ScaleGraphic /></ScaleBarDraw>
                  <ScaleLabel $x={90} $y={19}>Miles</ScaleLabel>
                </ScaleBar>
              </Page>
            </Canvas>
            <VScroll>
              <ScrollArrow><Chev dir="up" size={10} /></ScrollArrow>
              <VThumb />
              <ScrollPush />
              <ScrollArrow><Chev size={10} /></ScrollArrow>
            </VScroll>
            <Corner />
            <HScroll>
              <HArrow><Chev dir="left" size={11} /></HArrow>
              <HThumb />
              <HArrow $right><Chev dir="right" size={11} /></HArrow>
            </HScroll>
            <Corner $bg="#2d2d2d" />
            <StatusBar>
              <StatusBox $ml={32} $w={124} $bg="#2b2b2b"><CaretDown /></StatusBox>
              <StatusSep $ml={6} />
              <StatusBox $ml={11} $w={57} $bg="#252525" $justify="space-between">70%<CaretDown /></StatusBox>
              <StatusSep $ml={5} />
              <GridToggle>
                <Ic w={20} h={20}><path d="M2 2H12V12H2ZM2 7H12M7 2V12" stroke="#6a6f72" strokeWidth="1.4" /><path d="M14 10V19M9.5 14.5H18.5" stroke="#cfe6f5" /></Ic>
              </GridToggle>
              <StatusItem $ml={6}><Chev size={11} color="#e0e0e0" /></StatusItem>
              <StatusSep $ml={10} />
              <StatusItem $ml={208}>154.267 , 76.379</StatusItem>
              <StatusBox $ml={224} $w={168} $bg="#262626" $justify="flex-start" $pl={3}>
                <Ic w={22} h={20}><rect x="9" y="2" width="12" height="11" fill="#2c88cc" stroke="#aaa" /><circle cx="7" cy="11" r="5.5" fill="#333" stroke="#2e9ae0" strokeWidth="1.4" /><path d="M5 11H9M7 9V13" stroke="#ddd" /><path d="M11 15L15 20" stroke="#c07a30" strokeWidth="2" /></Ic>
                Selected Elements: 1
              </StatusBox>
              <StatusSep $ml={5} />
              <StatusItem $ml={9}><PauseBar /><PauseBar /></StatusItem>
              <StatusSep $ml={6} />
              <StatusItem $ml={8}>
                <Ic w={20} h={22}><path d="M2 9C3 3 12 1 16 6M18 13C17 19 8 21 4 16" stroke="#2e8fd8" strokeWidth="3" /><path d="M13 8H20V1ZM7 14H0V21Z" fill="#2e8fd8" /></Ic>
              </StatusItem>
            </StatusBar>
          </Workspace>
        </Center>

        <Panel $w={420} $ml={9}>
          <PanelHead $pl={7}>
            <PanelTitle>Catalog</PanelTitle>
            <PanelBtn><Chev size={11} /></PanelBtn>
            <PanelBtn><Pin /></PanelBtn>
            <PanelBtn><Close /></PanelBtn>
          </PanelHead>
          <CatTabs>
            <CatTab $on $mr={12}>Project</CatTab>
            <CatTab $mr={11}>Portal</CatTab>
            <CatTab $mr={12}>Computer</CatTab>
            <CatTab $mr={0}>Favorites</CatTab>
            <Hamburger><HamBar /><HamBar /><HamBar /></Hamburger>
          </CatTabs>
          <CatSearch>
            <RoundBack><Chev dir="left" size={9} color="#666" /></RoundBack>
            <SquareBtn $w={24}>
              <Ic w={16} h={16}><path d="M1 8L8 2L15 8M3 7V14H13V7" stroke="#6a6a6a" /><rect x="6" y="9" width="4" height="5" fill="#4c7a4a" /></Ic>
            </SquareBtn>
            <SquareBtn $w={30} $on><Ic w={18} h={18}><path d="M1 2H17L11 9V17H7V9Z" stroke="#c8c8c8" strokeWidth="1.3" /><path d="M1 2H17" stroke="#c8c8c8" strokeWidth="2" /></Ic></SquareBtn>
            <CatInput>
              <SearchText>Search Project</SearchText>
              <Magnifier />
              <SearchChev><Chev size={11} /></SearchChev>
            </CatInput>
          </CatSearch>
          <CatTree>
            <Row $pl={11}><Tri $w={20}><Solid /></Tri>{catIcons.maps}<RowText $ml={10}>Maps</RowText></Row>
            <SelRow $pl={5}><MapTile /><RowText $ml={10}>Map</RowText></SelRow>
            <Row $pl={51}><MapTile /><RowText $ml={10}>Map1</RowText></Row>
            <Row $pl={51}><MapTile /><RowText $ml={10}>Map2</RowText></Row>
            {[['Toolboxes', 'toolboxes'], ['Databases', 'databases'], ['Layouts', 'layouts'], ['Styles', 'styles'], ['Folders', 'folders'], ['Locators', 'locators']].map(([n, k]) => (
              <Row key={n} $pl={15}><Tri $w={16}><Hollow /></Tri>{catIcons[k]}<RowText $ml={10}>{n}</RowText></Row>
            ))}
          </CatTree>
        </Panel>
      </Body>

      <Menu>
        {menu.map((m, idx) => {
          if (m === 'sep') return <MenuSep key={idx}><MenuLine /></MenuSep>;
          return (
            <MenuRow key={idx} $off={m.off}>
              <MenuIcon $off={m.off}>{m.i && menuIc[m.i]}</MenuIcon>
              <MenuLabel>
                {m.t.slice(0, m.u)}<u>{m.t[m.u]}</u>{m.t.slice(m.u + 1)}
              </MenuLabel>
              <MenuKey $off={m.off}>{m.k}</MenuKey>
              {m.sub && <Chev dir="right" size={12} color="#a8a8a8" sw={1.1} />}
            </MenuRow>
          );
        })}
      </Menu>
    </Screen>
  );
}
